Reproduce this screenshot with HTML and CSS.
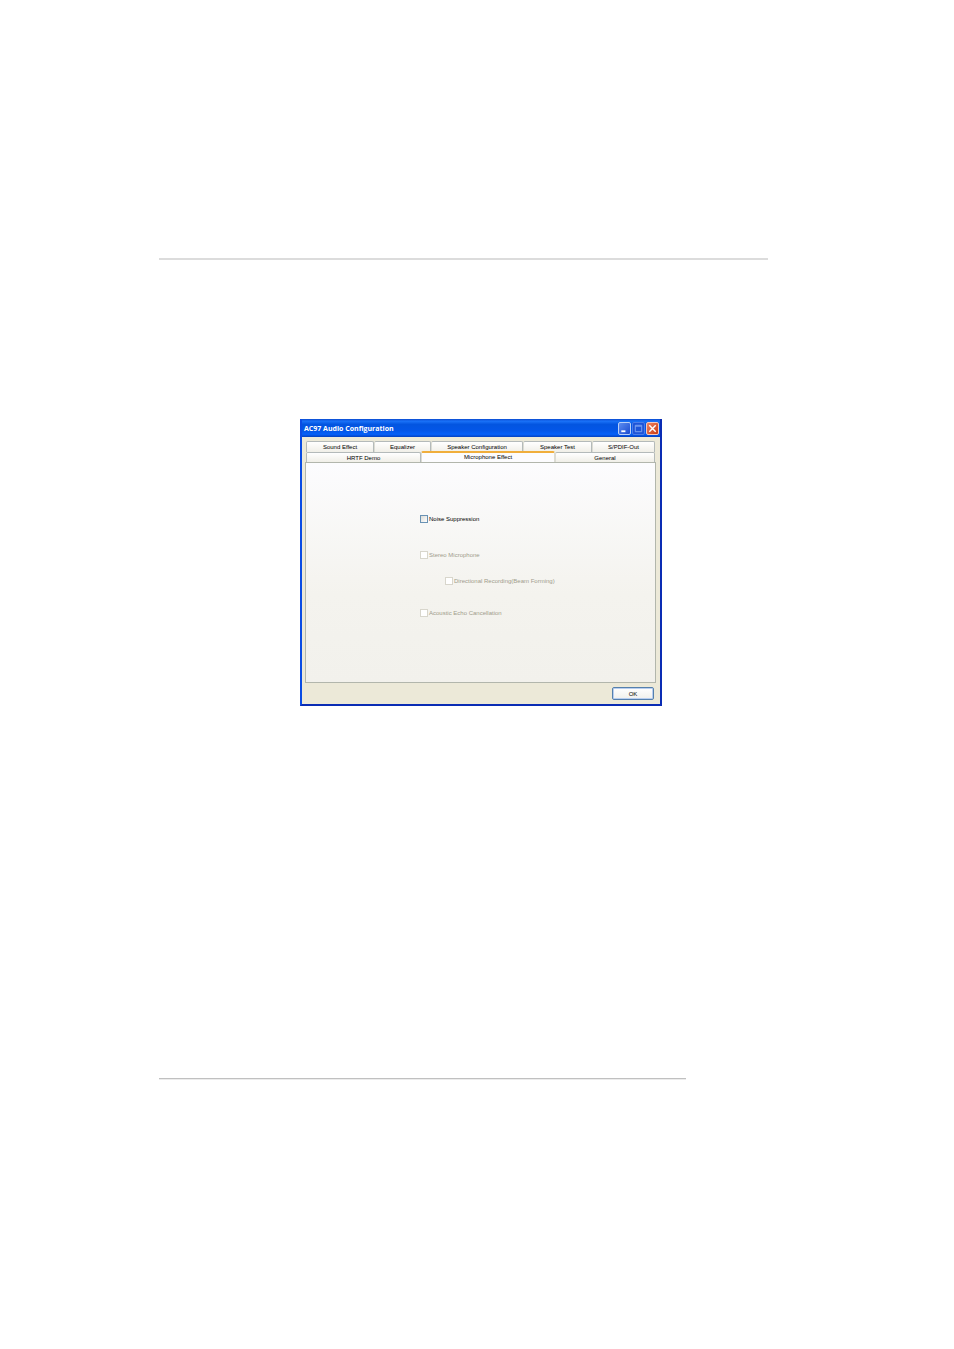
FILE: index.html
```html
<!DOCTYPE html>
<html lang="en">
<head>
    <meta charset="UTF-8">
    <meta name="viewport" content="width=device-width, initial-scale=1.0">
    <title>AC97 Audio Configuration</title>
    <link rel="stylesheet" href="styles.css">
</head>
<body>
    <div class="page">
        <hr class="rule">

        <div class="window">
            <div class="title-bar">
                <div class="title">AC97 Audio Configuration</div>
                <button class="win-btn" aria-label="Minimize">
                    <svg viewBox="0 0 12 12"><path d="M2.5 9h4.5" stroke="#fff" stroke-width="2"/></svg>
                </button>
                <button class="win-btn max" aria-label="Maximize" disabled>
                    <svg viewBox="0 0 12 12"><path d="M2.5 2.5h7v7h-7z M2.5 3.5h7" fill="none" stroke="#7fa5f2" stroke-width="1"/></svg>
                </button>
                <button class="win-btn close" aria-label="Close">
                    <svg viewBox="0 0 12 12"><path d="M2.5 2.5l7 7M9.5 2.5l-7 7" stroke="#fff" stroke-width="1.6"/></svg>
                </button>
            </div>

            <div class="content">
                <div class="tabs" role="tablist">
                    <div class="tab-row first">
                        <button class="tab" role="tab">Sound Effect</button>
                        <button class="tab" role="tab">Equalizer</button>
                        <button class="tab" role="tab">Speaker Configuration</button>
                        <button class="tab" role="tab">Speaker Test</button>
                        <button class="tab" role="tab">S/PDIF-Out</button>
                    </div>
                    <div class="tab-row second">
                        <button class="tab" role="tab">HRTF Demo</button>
                        <button class="tab active" role="tab" aria-selected="true">Microphone Effect</button>
                        <button class="tab" role="tab">General</button>
                    </div>
                </div>

                <div class="panel" role="tabpanel">
                    <div class="options">
                        <label class="option noise"><input type="checkbox">Noise Suppression</label>
                        <label class="option stereo"><input type="checkbox" disabled>Stereo Microphone</label>
                        <label class="option beam"><input type="checkbox" disabled>Directional Recording(Beam Forming)</label>
                        <label class="option echo"><input type="checkbox" disabled>Acoustic Echo Cancellation</label>
                    </div>
                </div>

                <div class="footer">
                    <button class="ok-btn">OK</button>
                </div>
            </div>
        </div>

        <hr class="rule bottom">
    </div>
</body>
</html>
```
FILE: styles.css
```css
* {
    box-sizing: border-box;
}
body {
    margin: 0;
    background: #fff;
    font-family: "Liberation Sans", Arial, sans-serif;
    font-size: 6px;
    line-height: 10px;
    color: #000;
}
button {
    font: inherit;
    color: inherit;
    padding: 0;
    margin: 0;
}
.page {
    padding: 258px 151px 269px 159px;
}
.rule {
    max-width: 609px;
    height: 2px;
    margin: 0;
    border: none;
    background: #dcdcdc;
}
.rule.bottom {
    max-width: 527px;
    background: linear-gradient(#c0c0c0 50%, #ececec 50%);
}

/* Window */
.window {
    max-width: 362px;
    margin: 159px auto 372px;
    border: 2px solid #0a4ce4;
    border-top: none;
    border-right-color: #0a2cb4;
    border-bottom-color: #0a2cb4;
    background: #ece9d8;
}
.title-bar {
    display: flex;
    align-items: center;
    gap: 1px;
    height: 18px;
    padding: 0 1px 0 2px;
    background: linear-gradient(#0a4ad0, #1a72f8 12%, #0355e0 30%, #0356e8 65%, #0560f8 85%, #0340c0);
}
.title {
    flex: 1;
    padding-top: 1px;
    color: #fff;
    font-family: "Open Sans", sans-serif;
    font-size: 7px;
    font-weight: bold;
}
.win-btn {
    width: 13px;
    height: 13px;
    border: 1px solid #b8cff8;
    border-radius: 2px;
    background: linear-gradient(135deg, #5c8cf0, #1a4bd0);
}
.win-btn svg {
    display: block;
    width: 100%;
}
.win-btn.max {
    border-color: #4a7ce8;
    background: #1d54d8;
}
.win-btn.close {
    border-color: #f4c8bc;
    background: linear-gradient(135deg, #ee8462, #c83a12);
}

/* Tabs */
.content {
    padding: 4px 4px 4px 3px;
}
.tabs {
    padding: 0 1px;
}
.tab-row {
    display: grid;
}
.tab-row.first {
    grid-template-columns: 68fr 57fr 92fr 69fr 63fr;
}
.tab-row.second {
    grid-template-columns: 115fr 134fr 100fr;
}
.tab {
    height: 11px;
    border: 1px solid #b4baba;
    border-left-color: #dcdcd4;
    border-bottom: none;
    border-radius: 2px 2px 0 0;
    background: linear-gradient(#fff, #f0efe8);
    white-space: nowrap;
}
.tab:first-child {
    border-left-color: #b4baba;
}
.tab-row.second .tab {
    height: 10px;
}
.tab-row.second .tab.active {
    height: 11px;
    margin-top: -1px;
    border-color: #dcdcd4;
    border-top: 2px solid #f0ae3c;
    background: #fcfcfe;
    line-height: 9px;
}

/* Panel */
.panel {
    padding: 51px 0 64px 114px;
    border: 1px solid #b2b6ac;
    background: linear-gradient(#fcfcfe, #f4f3ee 60%, #f2f1ec);
}
.options {
    display: flex;
    flex-direction: column;
    align-items: flex-start;
}
.option {
    display: flex;
    align-items: center;
    gap: 1px;
}
.option input {
    appearance: none;
    width: 8px;
    height: 8px;
    margin: 0;
    border: 1px solid #6a92b4;
    background: linear-gradient(135deg, #dcdcd7, #fff);
}
.option:has(input:disabled) {
    color: #a09c8c;
}
.option input:disabled {
    border-color: #d8d6cc;
    background: #fff;
}
.option.stereo {
    margin-top: 26px;
}
.option.beam {
    margin: 16px 0 0 25px;
}
.option.echo {
    margin-top: 22px;
}

/* Footer */
.footer {
    display: flex;
    justify-content: flex-end;
    padding: 4px 2px 0 0;
}
.ok-btn {
    width: 42px;
    height: 13px;
    border: 1px solid #5580ac;
    border-radius: 2px;
    background: linear-gradient(#fff, #f0f0ec);
    box-shadow: inset 0 0 0 1px #b8cef0;
}
```
